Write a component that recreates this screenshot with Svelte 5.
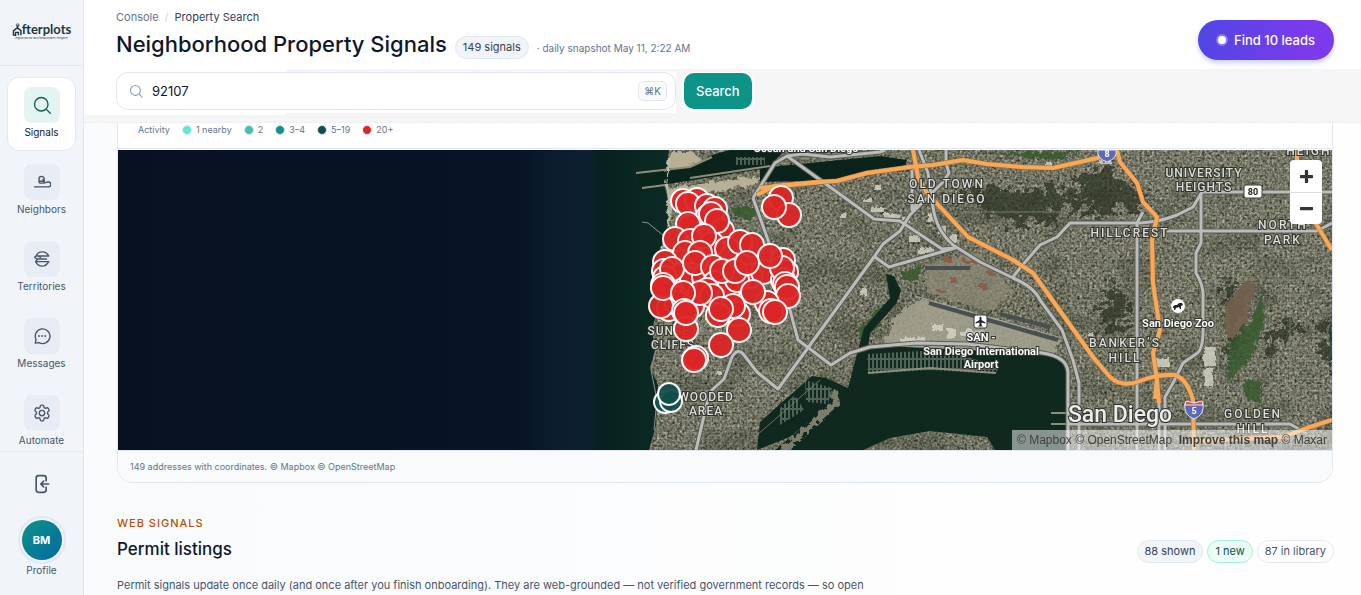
<script lang="ts">
  const nav = [
    { label: 'Signals', icon: 'search', active: true },
    { label: 'Neighbors', icon: 'neighbors', active: false },
    { label: 'Territories', icon: 'territories', active: false },
    { label: 'Messages', icon: 'messages', active: false },
    { label: 'Automate', icon: 'automate', active: false }
  ]

  const legend = [
    { label: '1 nearby', color: '#5eead4' },
    { label: '2', color: '#3fc1b3' },
    { label: '3–4', color: '#0d9488' },
    { label: '5–19', color: '#134e4a' },
    { label: '20+', color: '#dc2626' }
  ]

  const red = [
    [683, 201], [697, 200], [688, 204], [707, 206], [715, 209], [708, 217], [711, 214], [722, 231], [717, 221],
    [690, 227], [688, 224], [675, 239], [690, 241], [712, 244], [727, 249], [704, 236], [740, 242], [752, 245], [685, 253],
    [700, 253], [665, 262], [664, 271], [672, 284], [682, 275], [692, 280], [704, 277], [665, 278], [672, 269], [695, 263], [713, 267],
    [715, 283], [728, 290], [750, 276], [763, 272], [737, 280], [722, 271], [735, 271], [747, 263], [783, 260],
    [786, 272], [783, 280], [782, 268], [770, 256], [785, 284], [787, 287], [788, 296], [767, 303], [669, 309], [677, 303],
    [661, 306], [663, 285], [663, 288], [692, 306], [707, 290], [712, 296], [700, 293], [683, 293], [753, 292], [738, 314],
    [733, 306], [718, 315], [721, 309], [684, 311], [686, 329], [686, 313], [771, 311], [775, 312],
    [739, 330], [721, 345], [696, 358], [694, 360], [781, 198], [789, 215], [774, 207]
  ]
  const teal = [[665, 402], [671, 401], [669, 394]]

  const roads = [
    'M753 198 775 163 787 156 803 154 830 157 880 152 885 150',
    'M753 198 768 240 790 310 798 340 810 349 831 365 850 353 870 347 917 343 967 344 1033 352Q1067 354 1068 372V450',
    'M696 450 707 403 712 390 724 379 732 357Q738 347 744 355L757 372 778 389 810 345 874 257 883 244 900 231 910 215 943 182 949 173 946 163V150',
    'M787 156 830 187 874 219 900 221 942 249 955 248 889 267 875 257',
    'M919 150 928 173 933 207Q936 230 953 245L980 262 1013 278Q1034 287 1040 300L1062 330 1073 360 1079 383V450',
    'M1013 277 1020 268 1040 245 1057 237 1070 223H1140Q1160 222 1177 215L1193 207 1202 192H1332',
    'M1167 231H1317L1332 223',
    'M1201 193V243L1196 253V273Q1204 286 1203 298V323Q1204 350 1196 354L1183 363 1173 383 1165 397V450',
    'M1143 212 1137 223V450',
    'M1068 424H1290L1304 432M1159 403V450',
    'M912 170V210L923 196'
  ]

  const highways = [
    'M760 188 820 182 837 181 867 173 910 167 933 165 963 160 987 164 1022 167 1053 168 1080 162 1110 155',
    'M757 195 774 186 820 182',
    'M913 150 918 177 927 193 943 210 968 237 1013 260 1033 273 1093 357 1110 377Q1122 388 1140 381 1157 374 1175 375 1187 379 1193 400L1194 450',
    'M1117 150 1120 162 1137 183 1143 202 1157 217 1152 240 1153 283 1160 330 1153 353 1157 380 1159 403M1157 377 1155 399',
    'M1194 441 1283 437 1307 428 1332 420',
    'M1297 150V170L1315 222 1332 250'
  ]

  const buildings = [
    [868, 205, 14, 6], [882, 212, 16, 5], [900, 216, 9, 6], [862, 197, 9, 4], [872, 183, 8, 6], [906, 234, 12, 7],
    [918, 246, 14, 7], [898, 336, 26, 7], [958, 329, 24, 6], [930, 322, 12, 8], [946, 328, 9, 10], [838, 212, 7, 5],
    [1098, 160, 12, 3], [1202, 344, 12, 20], [1152, 356, 16, 10], [926, 211, 8, 10], [936, 224, 9, 9], [946, 234, 10, 8],
    [1203, 365, 9, 20], [1086, 330, 6, 5], [716, 370, 5, 4], [860, 286, 6, 9], [1044, 161, 7, 4]
  ]

  let query = $state('92107')
</script>

<div class="app">
  <aside class="sidebar">
    <a class="logo" href="#home" aria-label="Afterplots">
      <span class="wordmark">
        <svg class="house" viewBox="0 0 14 18" fill="none" stroke="#1d3640" stroke-width="2">
          <path d="M2 17V11L7.500 6.500 12.500 10.500V17M2 17H5V13H9V17M7 5L9 3" />
          <circle cx="8" cy="3" r="2" stroke-width="1" />
        </svg>fterplots
      </span>
      <small>neighbor and sold radius farmland property intelligence</small>
    </a>

    <nav>
      {#each nav as item}
        <a class="nav-item" class:active={item.active} href="#{item.icon}">
          <span class="nav-icon">
            <svg viewBox="0 0 24 24" fill="none" stroke="currentColor" stroke-width="1.8" stroke-linecap="round" stroke-linejoin="round">
              {#if item.icon === 'search'}
                <circle cx="11" cy="11" r="9" />
                <path d="M17.500 17.500 23 23" />
              {:else if item.icon === 'neighbors'}
                <path d="M2 18.500h18.500a3 3 0 0 0 0-6.500c-4 0-4 1.500-7.500 1.500h-3a2 2 0 0 1-2-2V8a3.500 3.500 0 0 1 7 0v4.500M9 11h4.500V8.500" />
              {:else if item.icon === 'territories'}
                <path d="M4 8C6 4 9 2.500 12 2.500S19 4 21 8H4l-2 2 4 2h12M7 8l3 2M6 12l-2.500 3.500H21C18.500 20 15 21.500 12 21.500s-6-1.500-8-5" />
              {:else if item.icon === 'messages'}
                <path d="M3 21.500l1-5A9.800 9.800 0 1 1 8 20.800L3 21.500z" />
                <path d="M7.800 12h.1M12 12h.1M16.200 12h.1" stroke-width="2.400" />
              {:else}
                <path d="M9.600 2.900c.2-.9.900-1.400 1.700-1.400h1.400c.8 0 1.500.5 1.700 1.400l.3 2 1.700 1 1.900-.7c.8-.3 1.600 0 2 .7l.9 1.500c.4.7.3 1.500-.3 2.100L19.400 11v2l1.500 1.500c.6.600.7 1.400.3 2.100l-.9 1.500c-.4.7-1.200 1-2 .7l-1.900-.7-1.700 1-.3 2c-.2.9-.9 1.400-1.700 1.400h-1.400c-.8 0-1.500-.5-1.700-1.400l-.3-2-1.700-1-1.900.7c-.8.3-1.600 0-2-.7l-.9-1.500c-.4-.7-.3-1.500.3-2.100L4.600 13v-2L3.100 9.500c-.6-.6-.7-1.400-.3-2.100l.9-1.500c.4-.7 1.200-1 2-.7l1.900.7 1.700-1z" />
                <circle cx="12" cy="12" r="3.600" />
              {/if}
            </svg>
          </span>
          <span>{item.label}</span>
        </a>
      {/each}
    </nav>

    <div class="side-foot">
      <button class="logout" aria-label="Log out">
        <svg viewBox="0 0 24 24" fill="none" stroke="currentColor" stroke-width="2" stroke-linecap="round" stroke-linejoin="round">
          <path d="M17 8V5a3 3 0 0 0-3-3H8a3 3 0 0 0-3 3v14a3 3 0 0 0 3 3h6a3 3 0 0 0 3-3v-3M20 12H11M14 8.500 10.500 12l3.500 3.500" />
        </svg>
      </button>
      <a class="profile" href="#profile">
        <span class="avatar">BM</span>
        <span>Profile</span>
      </a>
    </div>
  </aside>

  <main>
    <header>
      <div class="title-row">
        <div>
          <div class="crumbs"><a href="#console">Console</a><i>/</i><span>Property Search</span></div>
          <div class="heading">
            <h1>Neighborhood Property Signals</h1>
            <span class="pill muted">149 signals</span>
            <span class="snapshot">· daily snapshot May 11, 2:22 AM</span>
          </div>
        </div>
        <button class="leads"><span class="pulse"></span>Find 10 leads</button>
      </div>
      <form class="search-row" onsubmit={(e) => e.preventDefault()}>
        <label class="search-box">
          <svg viewBox="0 0 24 24" fill="none" stroke="currentColor" stroke-width="2" stroke-linecap="round">
            <circle cx="11" cy="11" r="8.500" />
            <path d="M17.500 17.500 22.500 22.500" />
          </svg>
          <input type="text" bind:value={query} aria-label="Search by ZIP or address" />
          <kbd>⌘K</kbd>
        </label>
        <button class="search-btn" type="submit">Search</button>
      </form>
    </header>

    <div class="content">
      <section class="card">
        <div class="legend">
          <span>Activity</span>
          {#each legend as entry}
            <span class="legend-item"><i class="dot" style="background: {entry.color}"></i>{entry.label}</span>
          {/each}
        </div>

        <div class="map">
          <svg class="map-canvas" viewBox="118 150 1214 300" preserveAspectRatio="xMidYMid slice">
            <defs>
              <linearGradient id="ocean" gradientUnits="userSpaceOnUse" x1="118" y1="0" x2="670" y2="0">
                <stop offset="0" stop-color="#071121" />
                <stop offset="0.72" stop-color="#071425" />
                <stop offset="0.79" stop-color="#0b1c2e" />
                <stop offset="0.85" stop-color="#0b202e" />
                <stop offset="0.875" stop-color="#05201e" />
                <stop offset="1" stop-color="#0d2c24" />
              </linearGradient>
              <filter id="terrain" x="0" y="0" width="100%" height="100%" color-interpolation-filters="sRGB">
                <feTurbulence type="fractalNoise" baseFrequency="0.4" numOctaves="3" seed="4" />
                <feColorMatrix values="0.6 0.4 0 0 -0.060  0.6 0.4 0 0 -0.055  0.58 0.38 0 0 -0.100  0 0 0 0 1" />
                <feComposite in2="SourceGraphic" operator="in" />
              </filter>
              <filter id="patches" x="0" y="0" width="100%" height="100%" color-interpolation-filters="sRGB">
                <feTurbulence type="fractalNoise" baseFrequency="0.025 0.035" numOctaves="3" seed="9" />
                <feColorMatrix values="0 0 0 0 0.13  0 0 0 0 0.16  0 0 0 0 0.10  0 5 0 0 -2.500" />
                <feComposite in2="SourceGraphic" operator="in" />
              </filter>
              <filter id="rough"><feTurbulence baseFrequency="0.12" numOctaves="2" /><feDisplacementMap in="SourceGraphic" scale="7" /></filter>
              <filter id="ragged"><feTurbulence baseFrequency="0.07" numOctaves="3" /><feDisplacementMap in="SourceGraphic" scale="34" xChannelSelector="R" yChannelSelector="G" /></filter>
              <pattern id="blocks" width="9" height="6" patternUnits="userSpaceOnUse">
                <path d="M0 0H9M0 0V6" stroke="#c3c3b6" stroke-width="1" />
              </pattern>
              <pattern id="tilted" width="9" height="6" patternUnits="userSpaceOnUse" patternTransform="rotate(-38)">
                <path d="M0 0H9M0 0V6" stroke="#c3c3b6" stroke-width="1" />
              </pattern>
              <pattern id="docks" width="4" height="10" patternUnits="userSpaceOnUse">
                <path d="M1 0V8M0 9H4" stroke="#929b8e" stroke-width="1" />
              </pattern>
            </defs>

            <rect x="118" y="150" width="1214" height="300" fill="url(#ocean)" />
            <path filter="url(#terrain)" d="M669 150 664 185 670 205 666 235 655 262 657 310 652 330 655 350 650 368 658 385 656 425 649 450H1332V150z" />
            <path fill="url(#blocks)" opacity="0.32" d="M1085 150H1332V450H1068V355L1060 230zM660 320H780V450H656z" />
            <path fill="url(#tilted)" opacity="0.3" d="M670 205 765 190 900 220 880 260 810 345 760 420 740 350 665 315zM950 165 1060 190 1080 240 1030 270 980 240z" />
            <path filter="url(#patches)" opacity="0.2" d="M680 190H1332V450H660z" />

            <g filter="url(#ragged)" fill="#2b3024" opacity="0.7">
              <path d="M960 180 1015 180 1090 188 1082 208 1060 204 1044 218 1030 210 1012 222 1000 210 985 214 970 200zM1070 168 1098 160 1112 172 1143 188 1128 206 1110 200 1096 214 1085 195zM1100 270 1115 285 1112 305 1124 300 1116 328 1092 322 1098 300zM1215 275 1235 275 1232 330 1222 360zM1318 305 1332 320V380L1324 360 1305 350 1320 340zM1262 320 1290 312 1300 318 1275 332 1250 362z" />
            </g>
            <g filter="url(#rough)">
              <path fill="#b8b094" d="M668 150H690L700 158 686 167H664zM664 187 705 181 760 175 750 184 690 193 670 207 667 230z" />
              <path fill="#74604d" opacity="0.9" d="M1222 322 1224 300 1245 278 1253 285 1245 320 1228 340z" />
              <path fill="#35592f" opacity="0.85" d="M728 205 755 205 750 220 735 214zM900 272 920 262 915 277 902 280zM857 330 882 300 876 325 860 340zM1227 345 1250 320 1262 285 1262 320 1250 355 1225 380zM1244 378 1260 380 1258 402 1244 395zM980 152 1080 150 1055 158z" />
              <path fill="#8f8b77" opacity="0.7" d="M925 262 975 250 1012 290 988 310 924 290z" />
              <path fill="#a5a390" opacity="0.85" d="M900 308 920 296 985 315 1060 338 1050 352 880 346 892 318z" />
              <path fill="#8a5f49" d="M942 256h9v4h-9zM962 258h12v4h-12zM948 276h7v4h-7zM977 281h9v6h-9zM985 270h8v4h-8zM935 288h9v3h-9z" />
            </g>
            <path fill="#0a231b" d="M637 174 694 166 712 155 730 150H785L768 168 700 179 642 188zM760 168 880 156 907 160 905 166 840 180 760 182z" />
            <path stroke="#8f8d79" stroke-width="2" fill="none" d="M636 173 690 167 712 157M642 188 665 185M690 178 770 166" />
            <path stroke="#b8c1b9" stroke-width="2" fill="none" filter="url(#rough)" d="M668 152 664 183 669 205 667 235 660 247" />
            <path stroke="#8d9690" stroke-width="1" fill="none" d="M642 222 648 223 664 236M656 350 651 370 657 400 654 430" />
            <path fill="#10291f" d="M886 274 894 276 901 291 896 304 870 333 868 347 885 346 1050 354 1066 366V450H995L987 437 930 431 890 438 863 450H775L833 402 848 388 858 350 864 328 890 298zM757 450 760 422 780 404 812 376 826 378 848 388 830 405 790 437z" />
            <path fill="url(#docks)" d="M867 354 940 350 1000 366 995 374 930 370 868 374zM780 408 795 395 804 410 780 425zM805 380 832 388 828 404 806 402zM736 157H765V165H736z" />
            <path stroke="#7b7d6b" stroke-width="6" fill="none" filter="url(#rough)" d="M780 450 834 401 832 388" />
            <path stroke="#8d8d7a" stroke-width="2" fill="none" d="M868 373 930 368 996 373M1051 413H1066M1051 424H1066" />
            <path stroke="#48504f" stroke-width="4" fill="none" d="M929 303 1058 340M925 268H970M1000 314 1050 327" />
            <path stroke="#a5a89c" stroke-width="1" fill="none" d="M915 296 1062 338" />
            {#each buildings as [x, y, w, h]}
              <rect {x} {y} width={w} height={h} fill="#d6d5c8" opacity="0.8" filter="url(#rough)" />
            {/each}

            <g fill="none" stroke="#8f9188" stroke-width="1" opacity="0.7">
              <path d="M800 205 860 190M720 210 760 195M800 240 830 250 860 220M1205 280H1332M1215 260V340L1220 380M1262 192V285M1290 192V400M880 180 930 200M1060 212H960M740 450 820 380" />
            </g>
            <g class="casing">{#each roads as d}<path {d} />{/each}</g>
            <g class="road">{#each roads as d}<path {d} />{/each}</g>
            <g class="highway-edge">{#each highways as d}<path {d} />{/each}</g>
            <g class="highway">{#each highways as d}<path {d} />{/each}</g>

            <g class="place"><text x="806" y="152">Ocean and San Diego</text></g>
            <g class="area">
              <text x="947" y="188">OLD TOWN</text><text x="947" y="203">SAN DIEGO</text>
              <text x="1130" y="237">HILLCREST</text>
              <text x="1283" y="229">NORTH</text><text x="1283" y="244">PARK</text>
              <text x="1125" y="347">BANKER’S</text><text x="1125" y="362">HILL</text>
              <text x="1253" y="418">GOLDEN</text><text x="1253" y="433">HILL</text>
              <text x="1318" y="155">HEIGHTS</text>
            </g>
            <g class="area tight">
              <text x="1204" y="177">UNIVERSITY</text><text x="1204" y="191">HEIGHTS</text>
              <text x="673" y="335">SUNSET</text><text x="673" y="349">CLIFFS</text>
              <text x="706" y="401">WOODED</text><text x="706" y="415">AREA</text>
            </g>
            <g class="place">
              <text x="981" y="341">SAN -</text>
              <text x="981" y="355">San Diego International</text>
              <text x="981" y="368">Airport</text>
              <text x="1178" y="327">San Diego Zoo</text>
            </g>
            <text class="city" x="1120" y="422">San Diego</text>

            <rect x="974" y="315" width="13" height="13" rx="2" fill="#fff" stroke="#30343a" />
            <path d="M980.500 316.500l1 1v2.500l4 2.500v1l-4-1v2.500l1.500 1.500h-5l1.500-1.500v-2.500l-4 1v-1l4-2.500v-2.500z" fill="#22262a" />
            <circle cx="1178" cy="306" r="7" fill="#fff" />
            <path d="M1173 308c0-3 2-3 4-3l2-2h3l1 2-2 1v3h-1l-1-2-3 1-1 2h-1v-2z" fill="#222" />
            <g class="shield">
              <path d="M1098 150H1116Q1118 158 1107 162 1096 158 1098 150z" />
              <text x="1107" y="157">8</text>
              <path d="M1185 403H1203Q1205 415 1194 419 1183 415 1185 403z" />
              <path class="crown" d="M1185 405 1186 401 1194 403 1202 401 1203 405z" />
              <text x="1194" y="414">5</text>
            </g>
            <rect x="1244" y="185" width="18" height="13" rx="2" fill="#fff" stroke="#3a3f3a" />
            <text class="route" x="1253" y="195">80</text>

            <g class="marker" fill="#dc2626">
              {#each red as [cx, cy]}<circle {cx} {cy} r="12" />{/each}
            </g>
            <g class="marker" fill="#134e4a">
              {#each teal as [cx, cy]}<circle {cx} {cy} r="11" />{/each}
            </g>
          </svg>

          <div class="zoom">
            <button aria-label="Zoom in"><svg viewBox="0 0 12 12"><path d="M6 1V11M1 6H11" /></svg></button>
            <button aria-label="Zoom out"><svg viewBox="0 0 12 12"><path d="M1 6H11" /></svg></button>
          </div>
          <div class="attribution">
            <a href="#mapbox">© Mapbox</a> <a href="#osm">© OpenStreetMap</a>&nbsp; <a href="#improve"><b>Improve this map</b></a> <a href="#maxar">© Maxar</a>
          </div>
        </div>

        <p class="card-foot">149 addresses with coordinates. © Mapbox © OpenStreetMap</p>
      </section>

      <section class="listings">
        <p class="eyebrow">WEB SIGNALS</p>
        <div class="listings-head">
          <h2>Permit listings</h2>
          <div class="pills">
            <span class="pill muted">88 shown</span>
            <span class="pill new">1 new</span>
            <span class="pill">87 in library</span>
          </div>
        </div>
        <p class="lede">Permit signals update once daily (and once after you finish onboarding). They are web-grounded — not verified government records — so open</p>
      </section>
    </div>
  </main>
</div>

<style>
  :global(body) {
    overflow: hidden;
  }

  .app {
    display: flex;
    height: 100vh;
    font-family: Inter, 'Liberation Sans', sans-serif;
    font-size: 12px;
    line-height: 16px;
    color: #475569;
    background: linear-gradient(90deg, #f8fafc, #fefefe 75%);
  }

  .app * {
    box-sizing: border-box;
  }

  a {
    color: inherit;
    text-decoration: none;
  }

  p, h1, h2 {
    margin: 0;
  }

  button, input, kbd {
    font-family: inherit;
  }

  button {
    border: none;
    cursor: pointer;
  }

  .sidebar {
    width: 84px;
    flex: none;
    display: flex;
    flex-direction: column;
    background: #f1f5f9;
    border-right: 1px solid #e2e8f0;
    font-size: 10px;
  }

  .logo {
    height: 66px;
    flex: none;
    display: flex;
    flex-direction: column;
    align-items: center;
    justify-content: center;
    padding-bottom: 4px;
    border-bottom: 1px solid #e2e8f0;
    color: #1d3640;
  }

  .wordmark {
    display: flex;
    align-items: flex-end;
    font-family: Lato, sans-serif;
    font-size: 13px;
    font-weight: 700;
    line-height: 15px;
  }

  .house {
    width: 10px;
    height: 15px;
  }

  .logo small {
    font-size: 2px;
    line-height: 3px;
  }

  nav {
    flex: 1;
    display: flex;
    flex-direction: column;
    gap: 3px;
    padding: 11px 7px 0;
    overflow: hidden;
  }

  .nav-item {
    flex: none;
    height: 74px;
    display: flex;
    flex-direction: column;
    align-items: center;
    gap: 1px;
    padding-top: 9px;
    border: 1px solid transparent;
    border-radius: 12px;
  }

  .nav-item.active {
    background: #fff;
    border-color: #e2e8f0;
    color: #0f172a;
  }

  .nav-icon {
    width: 36px;
    height: 36px;
    display: grid;
    place-items: center;
    border-radius: 8px;
    background: #e8edf5;
  }

  .nav-icon svg {
    width: 18px;
  }

  .active .nav-icon {
    background: #e3f4f2;
    color: #115e59;
  }

  .side-foot {
    flex: none;
    height: 144px;
    display: flex;
    flex-direction: column;
    align-items: center;
    gap: 20px;
    padding-top: 20px;
    border-top: 1px solid #e2e8f0;
  }

  .logout {
    padding: 2px;
    height: 24px;
    background: none;
    color: #475569;
  }

  .logout svg {
    height: 20px;
  }

  .profile {
    display: flex;
    flex-direction: column;
    align-items: center;
    line-height: 12px;
  }

  .avatar {
    width: 48px;
    height: 48px;
    display: grid;
    place-items: center;
    border: 2px solid #e2e8f0;
    border-radius: 50%;
    background: linear-gradient(135deg, #0d9488, #0369a1) content-box;
    padding: 2px;
    color: #fff;
    font-size: 11px;
    font-weight: 700;
  }

  main {
    flex: 1;
    min-width: 0;
    display: flex;
    flex-direction: column;
    overflow: hidden;
  }

  header {
    flex: none;
    background: #fff;
  }

  .title-row {
    height: 69px;
    display: flex;
    justify-content: space-between;
    align-items: flex-start;
    padding: 9px 27px 0 32px;
  }

  .crumbs {
    display: flex;
    gap: 6px;
    font-size: 11px;
    color: #64748b;
  }

  .crumbs i {
    color: #cbd5e1;
    font-style: normal;
  }

  .crumbs span {
    color: #334155;
  }

  .heading {
    display: flex;
    align-items: flex-start;
    gap: 8px;
  }

  h1 {
    font-size: 22px;
    line-height: 38px;
    font-weight: 500;
    color: #0f172a;
  }

  .pill {
    padding: 2px 7px;
    border: 1px solid #e2e8f0;
    border-radius: 12px;
    background: #fff;
    font-size: 11px;
    line-height: 17px;
    color: #475569;
    white-space: nowrap;
  }

  .pill.muted {
    background: #f1f5f9;
    color: #334155;
  }

  .pill.new {
    background: #ecfdf5;
    border-color: #a7f0d2;
    color: #134e4a;
  }

  .heading .pill {
    margin-top: 11px;
  }

  .snapshot {
    margin-top: 15px;
    font-size: 10px;
    color: #64748b;
  }

  .leads {
    display: flex;
    align-items: center;
    gap: 6px;
    height: 40px;
    margin-top: 11px;
    padding: 0 19px 0 18px;
    border-radius: 20px;
    background: linear-gradient(100deg, #4f46e5, #7c3aed 80%);
    box-shadow: 0 3px 5px #c7d2fe;
    color: #fff;
    font-size: 13px;
    font-weight: 500;
  }

  .pulse {
    width: 12px;
    height: 12px;
    border: 2px solid #8b7bf0;
    border-radius: 50%;
    background: #fff;
  }

  .search-row {
    height: 54px;
    display: flex;
    gap: 8px;
    align-items: flex-start;
    padding: 3px 32px 0;
    background: linear-gradient(#fff, #fff) 0 0 / 202px 46px no-repeat, linear-gradient(#fff, #fff) 0 3px / 592px 41px no-repeat, #f5f5f5;
    border-bottom: 1px dashed #e8ecf3;
  }

  .search-box {
    flex: 0 1 560px;
    height: 38px;
    display: flex;
    align-items: center;
    gap: 9px;
    padding: 0 8px 0 12px;
    border: 1px solid #dfe6f0;
    border-radius: 12px;
    background: #fff;
    color: #94a3b8;
  }

  .search-box svg {
    width: 14px;
  }

  .search-box input {
    flex: 1;
    min-width: 0;
    padding: 0;
    border: none;
    outline: none;
    background: none;
    font-size: 13px;
    color: #0f172a;
  }

  kbd {
    height: 20px;
    padding: 0 5px;
    border: 1px solid #e2e8f0;
    border-radius: 5px;
    background: #f8fafc;
    font-size: 10px;
    line-height: 18px;
    color: #64748b;
  }

  .search-btn {
    height: 36px;
    margin-top: 1px;
    padding: 0 12px;
    border-radius: 10px;
    background: #0d9488;
    box-shadow: 0 1px 0 2px #fff;
    color: #fff;
    font-size: 13px;
    font-weight: 500;
  }

  .content {
    padding: 0 27px 0 33px;
  }

  .card {
    margin-right: 1px;
    border: 1px solid #e2e8f0;
    border-top: none;
    border-radius: 0 0 16px 16px;
    background: #fff;
    overflow: hidden;
  }

  .legend {
    height: 27px;
    display: flex;
    align-items: flex-start;
    gap: 12px;
    padding: 0 20px;
    margin-top: -1px;
    border-bottom: 1px solid #e2e8f0;
    font-size: 9px;
    color: #64748b;
  }

  .legend-item {
    display: flex;
    align-items: center;
    gap: 4px;
  }

  .dot {
    width: 10px;
    height: 10px;
    border: 1px solid #e2e8f0;
    border-radius: 50%;
  }

  .map {
    position: relative;
    height: 300px;
    margin-top: 1px;
  }

  .map-canvas {
    display: block;
    width: 100%;
    height: 100%;
  }

  .casing, .road, .highway, .highway-edge {
    fill: none;
    stroke-linejoin: round;
  }

  .casing {
    stroke: #5a5d56;
    stroke-width: 5;
  }

  .road {
    stroke: #bcbcba;
    stroke-width: 3;
  }

  .highway-edge {
    stroke: #a4713d;
    stroke-width: 5;
  }

  .highway {
    stroke: #f9a857;
    stroke-width: 4;
  }

  .area, .place, .city {
    font-family: Roboto, sans-serif;
    fill: #fff;
    stroke: #2e322c;
    stroke-width: 2;
    paint-order: stroke;
    text-anchor: middle;
  }

  .area {
    font-size: 12px;
    font-weight: 500;
    letter-spacing: 2px;
    fill: #deded9;
  }

  .area.tight {
    letter-spacing: 1px;
  }

  .place {
    font-size: 11px;
    font-weight: 700;
  }

  .city {
    font-size: 23px;
    font-weight: 500;
    fill: #ececea;
  }

  .shield path {
    fill: #5b6bb5;
    stroke: #e8ebf5;
    stroke-width: 1;
  }

  .shield .crown {
    fill: #e0474c;
  }

  .shield text, .route {
    font-family: Roboto, sans-serif;
    font-size: 9px;
    font-weight: 700;
    text-anchor: middle;
    fill: #fff;
  }

  .route {
    fill: #222;
  }

  .marker circle {
    stroke: #fff;
    stroke-width: 2;
    opacity: 0.95;
  }

  .zoom {
    position: absolute;
    top: 10px;
    right: 10px;
    display: flex;
    flex-direction: column;
    border-radius: 4px;
    background: #fff;
    overflow: hidden;
  }

  .zoom button {
    width: 32px;
    height: 32px;
    display: grid;
    place-items: center;
    padding: 0;
    background: none;
  }

  .zoom button + button {
    border-top: 1px solid #ddd;
  }

  .zoom svg {
    width: 13px;
    fill: none;
    stroke: #333;
    stroke-width: 3;
    stroke-linecap: round;
  }

  .attribution {
    position: absolute;
    right: 0;
    bottom: 0;
    padding: 0 5px;
    background: rgba(255, 255, 255, 0.5);
    font-family: 'Liberation Sans', sans-serif;
    font-size: 12px;
    line-height: 20px;
    color: #404040;
  }

  .card-foot {
    padding: 8px 12px 7px;
    background: #f8fafc;
    border-top: 1px solid #e2e8f0;
    font-size: 9px;
    color: #64748b;
  }

  .listings {
    padding-top: 32px;
  }

  .eyebrow {
    font-size: 11px;
    font-weight: 500;
    letter-spacing: 1px;
    color: #b45309;
  }

  .listings-head {
    display: flex;
    justify-content: space-between;
    align-items: center;
    padding: 4px 0 12px;
  }

  h2 {
    font-size: 17px;
    line-height: 24px;
    font-weight: 500;
    color: #0f172a;
  }

  .pills {
    display: flex;
    gap: 4px;
    margin-top: 5px;
  }

  .lede {
    font-size: 11px;
    line-height: 20px;
    white-space: nowrap;
  }
</style>
